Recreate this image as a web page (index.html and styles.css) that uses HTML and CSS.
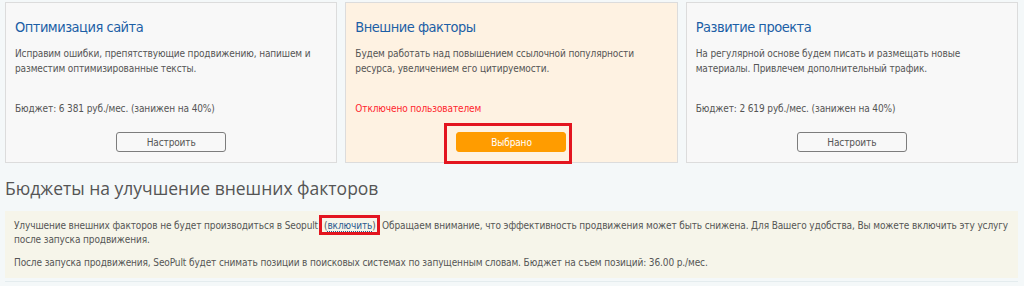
FILE: index.html
```html
<!DOCTYPE html>
<html lang="ru">
<head>
  <meta charset="UTF-8">
  <title>Бюджеты</title>
  <link rel="stylesheet" href="styles.css">
</head>
<body>

  <div class="cards">
    <div class="card">
      <h2 class="card-title">Оптимизация сайта</h2>
      <p class="card-text">Исправим ошибки, препятствующие продвижению, напишем и разместим оптимизированные тексты.</p>
      <p class="card-budget">Бюджет: 6 381 руб./мес. (занижен на 40%)</p>
      <button class="btn">Настроить</button>
    </div>

    <div class="card card-selected">
      <h2 class="card-title">Внешние факторы</h2>
      <p class="card-text">Будем работать над повышением ссылочной популярности ресурса, увеличением его цитируемости.</p>
      <p class="card-budget card-off">Отключено пользователем</p>
      <button class="btn btn-orange">Выбрано</button>
    </div>

    <div class="card">
      <h2 class="card-title">Развитие проекта</h2>
      <p class="card-text">На регулярной основе будем писать и размещать новые материалы. Привлечем дополнительный трафик.</p>
      <p class="card-budget">Бюджет: 2 619 руб./мес. (занижен на 40%)</p>
      <button class="btn">Настроить</button>
    </div>
  </div>

  <h1 class="section-title">Бюджеты на улучшение внешних факторов</h1>

  <div class="notice">
    <p>Улучшение внешних факторов не будет производиться в Seopult<span class="mark">(<a href="#">включить</a>)</span>. Обращаем внимание, что эффективность продвижения может быть снижена. Для Вашего удобства, Вы можете включить эту услугу после запуска продвижения.</p>
    <p>После запуска продвижения, SeoPult будет снимать позиции в поисковых системах по запущенным словам. Бюджет на съем позиций: 36.00 р./мес.</p>
  </div>

  <div class="footer-line"></div>

</body>
</html>
```

FILE: styles.css
```css
body {
  margin: 0;
  padding: 2px 6px 0 5px;
  background: #f4f8f9;
  font-family: "DejaVu Sans Condensed", "Liberation Sans", Arial, sans-serif;
  font-size: 10px;
  letter-spacing: -0.12px;
  color: #555;
  overflow: hidden;
}
.cards {
  display: grid;
  grid-template-columns: 1fr 1fr 1fr;
  gap: 8px;
}
.card {
  display: flex;
  flex-direction: column;
  align-items: flex-start;
  height: 161px;
  box-sizing: border-box;
  padding: 12px 9px 10px 9px;
  background: #f8f8f8;
  border: 1px solid #dcdcdc;
}
.card-selected {
  background: #fef2e2;
}
.card-title {
  margin: 0;
  font-family: "DejaVu Sans Condensed", "DejaVu Sans", sans-serif;
  font-weight: normal;
  font-size: 14.5px;
  letter-spacing: -0.5px;
  line-height: 24px;
  color: #1c5fa6;
}
.card-text {
  margin: 7px 0 0 0;
  line-height: 15px;
  height: 30px;
}
.card-budget {
  margin: 25px 0 0 0;
  line-height: 15px;
}
.card-off {
  color: #ff1f2d;
}
.btn {
  position: relative;
  align-self: center;
  margin-top: 16px;
  width: 110px;
  height: 20px;
  padding: 0;
  background: #f8f8f8;
  border: 1px solid #7d7d7d;
  border-radius: 3px;
  font-family: "DejaVu Sans Condensed", "Liberation Sans", Arial, sans-serif;
  font-size: 10px;
  letter-spacing: -0.12px;
  color: #555;
}
.btn-orange {
  height: 21px;
  background: #ff9c00;
  border-color: #ff9c00;
  color: #fff;
}
/* красная рамка поверх кнопки */
.btn-orange::after {
  content: "";
  position: absolute;
  left: -13px;
  right: -7px;
  top: -10px;
  bottom: -13px;
  border: 3px solid #e3151f;
}
.section-title {
  margin: 12px 0 0 0;
  font-family: "Open Sans", sans-serif;
  font-weight: normal;
  font-size: 17.5px;
  letter-spacing: 0;
  line-height: 26px;
  color: #555;
}
.notice {
  margin-top: 10px;
  padding: 8px 9px;
  background: #f6f5ea;
}
.notice p {
  margin: 0;
  line-height: 14px;
}
.notice p + p {
  margin-top: 9px;
}
.mark {
  position: relative;
  margin: 0 1px 0 6px;
}
.mark a {
  color: #2c5b8e;
  text-decoration: none;
  border-bottom: 1px dotted #2c5b8e;
}
/* красная рамка вокруг ссылки */
.mark::after {
  content: "";
  position: absolute;
  left: -5px;
  right: -4px;
  top: -5px;
  bottom: -4px;
  border: 3px solid #e3151f;
}
.footer-line {
  margin-top: 3px;
  height: 6px;
  border-top: 1px solid #e4ecee;
}
```
